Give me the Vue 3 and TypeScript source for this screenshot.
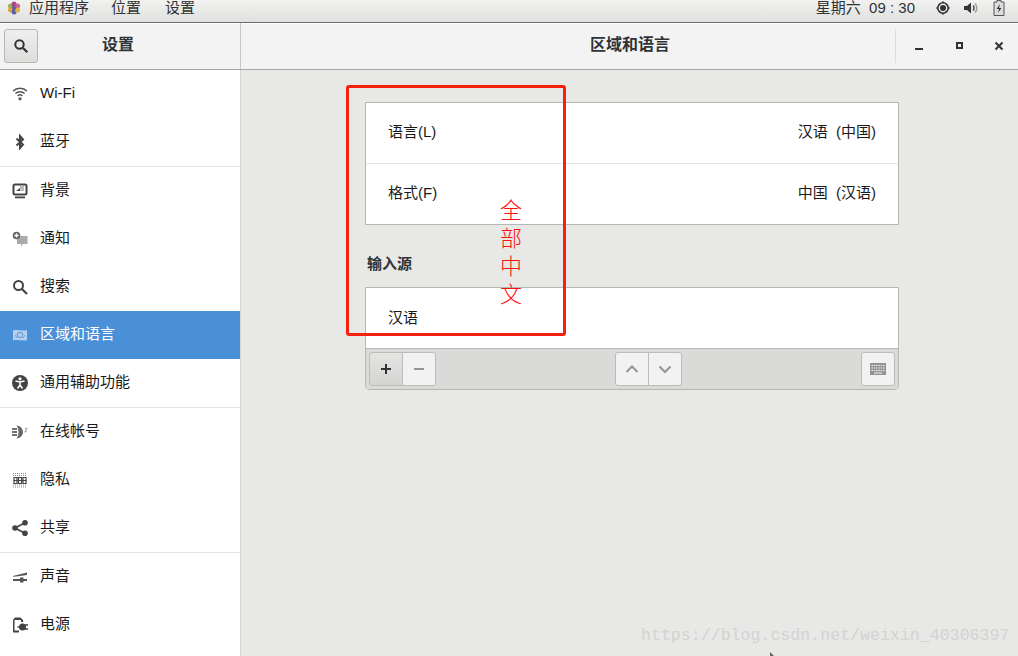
<script setup lang="ts">
interface Item { label: string; icon: string; active?: boolean; sepAfter?: boolean }
const items: Item[] = [
  { label: 'Wi-Fi', icon: 'wifi' },
  { label: '蓝牙', icon: 'bt', sepAfter: true },
  { label: '背景', icon: 'bg' },
  { label: '通知', icon: 'notify' },
  { label: '搜索', icon: 'search' },
  { label: '区域和语言', icon: 'region', active: true },
  { label: '通用辅助功能', icon: 'access', sepAfter: true },
  { label: '在线帐号', icon: 'online' },
  { label: '隐私', icon: 'privacy' },
  { label: '共享', icon: 'share', sepAfter: true },
  { label: '声音', icon: 'sound' },
  { label: '电源', icon: 'power' },
]
const redChars: string[] = ['全', '部', '中', '文']
const clock = '星期六  09 : 30'
const langValue = '汉语  (中国)'
const formatValue = '中国  (汉语)'
</script>

<template>
  <div class="root">
    <div class="topbar">
      <div class="top-left">
        <svg class="logo" width="14" height="14" viewBox="0 0 14 14">
          <circle cx="3.500" cy="5" r="2.500" fill="#9ab04a" />
          <circle cx="7" cy="3" r="2.500" fill="#a8478f" />
          <circle cx="10.500" cy="5" r="2.500" fill="#c9609a" />
          <circle cx="3.500" cy="9" r="2.500" fill="#d9a83a" />
          <circle cx="7" cy="11" r="2.500" fill="#5a62a8" />
          <circle cx="10.500" cy="9" r="2.500" fill="#e3b23c" />
          <circle cx="7" cy="7" r="2.200" fill="#6e5a9c" />
        </svg>
        <span class="menu first">应用程序</span>
        <span class="menu">位置</span>
        <span class="menu">设置</span>
      </div>
      <div class="top-right">
        <span class="clock">{{ clock }}</span>
        <svg class="tray-rec" width="14" height="14" viewBox="0 0 14 14">
          <circle cx="7" cy="7" r="5.200" fill="none" stroke="#333" stroke-width="1.600" />
          <circle cx="7" cy="7" r="3" fill="#333" />
          <path d="M7 0v2M7 12v2M0 7h2M12 7h2" stroke="#333" stroke-width="1" />
        </svg>
        <svg class="tray-vol" width="16" height="14" viewBox="0 0 16 14">
          <path d="M1 5h3l4-3.500v11L4 9H1z" fill="#333" />
          <path d="M10 4.500a3.500 3.500 0 0 1 0 5" fill="none" stroke="#444" stroke-width="1.400" />
          <path d="M12 2.500a6.500 6.500 0 0 1 0 9" fill="none" stroke="#999" stroke-width="1.400" />
        </svg>
        <svg class="tray-bat" width="12" height="16" viewBox="0 0 12 16">
          <path d="M4 .5h4v1.500h3v13.500H1V2h3z" fill="#ddd" stroke="#555" stroke-width="1" />
          <path d="M7 4 3.600 9H6l-1 4 3.400-5H6z" fill="#333" />
        </svg>
      </div>
    </div>

    <div class="headerbar">
      <div class="head-left">
        <button class="search-btn" aria-label="搜索">
          <svg width="16" height="16" viewBox="0 0 16 16">
            <circle cx="6.500" cy="6.500" r="4.200" fill="none" stroke="#2e3436" stroke-width="2" />
            <path d="M10 10l4.300 4.300" stroke="#2e3436" stroke-width="2.200" />
          </svg>
        </button>
        <span class="head-title">设置</span>
      </div>
      <div class="head-main">
        <span class="main-title">区域和语言</span>
        <div class="win-controls">
          <svg width="10" height="10" viewBox="0 0 10 10"><rect x="1" y="7" width="8" height="2" fill="#2e3436" /></svg>
          <svg width="10" height="10" viewBox="0 0 10 10"><path d="M3 2h5v5H3z" fill="none" stroke="#2e3436" stroke-width="2" /></svg>
          <svg width="10" height="10" viewBox="0 0 10 10"><path d="M1.500 1.500l7 7M8.500 1.500l-7 7" stroke="#2e3436" stroke-width="2" /></svg>
        </div>
      </div>
    </div>

    <div class="body">
      <aside class="sidebar">
        <template v-for="it in items" :key="it.label">
          <div class="row" :class="{ active: it.active }">
            <svg class="ico" width="16" height="16" viewBox="0 0 16 16">
              <g v-if="it.icon === 'wifi'" fill="none" stroke="#555" stroke-width="1.500">
                <path d="M1 5a10 10 0 0 1 14 0" />
                <path d="M3.400 7.500a6.600 6.600 0 0 1 9.200 0" />
                <path d="M5.600 10a3.400 3.400 0 0 1 4.800 0" />
                <circle cx="8" cy="12.800" r="1.600" fill="#555" stroke="none" />
              </g>
              <path v-else-if="it.icon === 'bt'" d="M4.500 4.500 11 10.500 8 14V2l3 3.500L4.500 11.500" fill="none" stroke="#444" stroke-width="2" />
              <g v-else-if="it.icon === 'bg'">
                <rect x="1.500" y="1.500" width="13" height="10" rx="1.500" fill="#fff" stroke="#444" stroke-width="2" />
                <rect x="8" y="3" width="4" height="5" fill="#bbb" />
                <path d="M4 8h4V5z" fill="#444" />
                <rect x="3" y="13.500" width="10" height="1.800" fill="#444" />
              </g>
              <g v-else-if="it.icon === 'notify'">
                <path d="M5 5h10.500v8H11l-2 2.500V13H5z" fill="#aaa" />
                <circle cx="4.500" cy="4.500" r="3.800" fill="#666" />
                <path d="M4.500 2.500v4M2.500 4.500h4" stroke="#fff" stroke-width="1.300" />
              </g>
              <g v-else-if="it.icon === 'search'" fill="none" stroke="#444" stroke-width="2">
                <circle cx="6.500" cy="6.500" r="4.500" />
                <path d="M10 10l5 5" stroke-width="2.200" />
              </g>
              <g v-else-if="it.icon === 'region'">
                <path d="M1 3.500c5-1.500 9 1 14-.5v10c-5 1.500-9-1-14 .5z" fill="#b4d0ef" />
                <circle cx="8" cy="8" r="2.600" fill="none" stroke="#6f9fd6" stroke-width="1.200" />
                <path d="M3.500 8a4.500 4.500 0 0 0 1.500 3M12.500 8a4.500 4.500 0 0 1-1.500 3" fill="none" stroke="#6f9fd6" />
              </g>
              <g v-else-if="it.icon === 'access'">
                <circle cx="8" cy="8" r="8" fill="#444" />
                <circle cx="8" cy="3.800" r="1.600" fill="#fff" />
                <path d="M3.500 6 8 7l4.500-1M8 7v3M8 10l-2.500 3.500M8 10l2.500 3.500" fill="none" stroke="#fff" stroke-width="1.500" />
              </g>
              <g v-else-if="it.icon === 'online'">
                <path d="M0 5h5M0 8h5M0 11h5" stroke="#444" stroke-width="1.600" />
                <path d="M4.500 1.500c3.500 0 6.500 3 6.500 6.500s-3 6.500-6.500 6.500c1.500-2 2-4 2-6.500s-.5-4.500-2-6.500z" fill="#666" />
                <path d="M15.500 4.500c-1.500-.8-2.500.3-1.700 1.300s.8 2.400-1.300 2" fill="none" stroke="#777" />
              </g>
              <g v-else-if="it.icon === 'privacy'">
                <path d="M1 1.500h14M1 3.500h14M1 13h14M1 15h14" stroke="#888" stroke-width="1.200" stroke-dasharray="1 1" />
                <path d="M2 5.500h3v6H2zM6.500 5.500h3v6h-3zM11 5.500h3v6h-3z" fill="none" stroke="#444" stroke-width="1.200" />
                <path d="M1.500 8.500h13" stroke="#444" />
              </g>
              <g v-else-if="it.icon === 'share'" fill="#444">
                <circle cx="3" cy="8" r="2.800" />
                <circle cx="13" cy="2.800" r="2.800" />
                <circle cx="13" cy="13.200" r="2.800" />
                <path d="M3 8l10-5.200M3 8l10 5.200" stroke="#444" stroke-width="1.600" />
              </g>
              <g v-else-if="it.icon === 'sound'" fill="#555">
                <path d="M1 7 15 3.500V6L6 7.300 1 7.800z" />
                <rect x="1" y="10" width="14" height="2" />
                <rect x="8" y="8.500" width="3.500" height="5" />
              </g>
              <g v-else-if="it.icon === 'power'">
                <path d="M3 .5h5.500L11 3v2H9V3H2.500v10.500H7V15.500H1V3z" fill="#444" />
                <circle cx="10.500" cy="10" r="3.500" fill="#444" />
                <path d="M5.500 10h3M13 8h3M13 12h3" stroke="#444" stroke-width="1.600" />
              </g>
            </svg>
            <span class="row-text">{{ it.label }}</span>
          </div>
          <div v-if="it.sepAfter" class="sep"></div>
        </template>
      </aside>

      <main class="content">
        <div class="column">
          <div class="listbox">
            <div class="lrow">
              <span class="ltext">语言(L)</span><span class="ltext">{{ langValue }}</span>
            </div>
            <div class="lrow divided">
              <span class="ltext">格式(F)</span><span class="ltext">{{ formatValue }}</span>
            </div>
          </div>
          <h3 class="section">输入源</h3>
          <div class="inputs">
            <div class="lrow single"><span class="ltext">汉语</span></div>
            <div class="toolbar">
              <div class="group">
                <button class="tbtn pressed" aria-label="添加">
                  <svg width="12" height="12" viewBox="0 0 12 12"><path d="M6 1v10M1 6h10" stroke="#2e3436" stroke-width="2" /></svg>
                </button>
                <button class="tbtn" aria-label="移除">
                  <svg width="12" height="12" viewBox="0 0 12 12"><path d="M1 6h10" stroke="#929595" stroke-width="2" /></svg>
                </button>
              </div>
              <div class="group">
                <button class="tbtn" aria-label="上移">
                  <svg width="14" height="14" viewBox="0 0 14 14"><path d="M1.500 10 7 4.500 12.500 10" fill="none" stroke="#929595" stroke-width="2" /></svg>
                </button>
                <button class="tbtn" aria-label="下移">
                  <svg width="14" height="14" viewBox="0 0 14 14"><path d="M1.500 4.500 7 10l5.500-5.500" fill="none" stroke="#929595" stroke-width="2" /></svg>
                </button>
              </div>
              <div class="group">
                <button class="tbtn" aria-label="键盘">
                  <svg width="16" height="12" viewBox="0 0 16 12">
                    <rect width="16" height="12" fill="#929595" />
                    <path d="M1.500 2.500h13M1.500 5h13M1.500 7.500h13" stroke="#f2f2f2" stroke-dasharray="1.500 .8" />
                    <path d="M4 10h8" stroke="#f2f2f2" />
                  </svg>
                </button>
              </div>
            </div>
          </div>
        </div>
      </main>
    </div>

    <div class="redbox"></div>
    <div class="redtext">
      <div v-for="c in redChars" :key="c" class="redchar">{{ c }}</div>
    </div>
    <div class="watermark">https://blog.csdn.net/weixin_40306397</div>
    <svg class="cursor" width="4" height="4" viewBox="0 0 4 4"><path d="M0 0l4 4H0z" fill="#666" /></svg>
  </div>
</template>

<style>
html, body { margin: 0; padding: 0; }
</style>

<style scoped>
.root {
  position: relative;
  width: 1018px;
  height: 656px;
  overflow: hidden;
  background: #e8e8e7;
  color: #2e3436;
  font-family: "Liberation Sans", "Noto Sans CJK SC", sans-serif;
  font-size: 15px;
}
.topbar {
  height: 23px;
  box-sizing: border-box;
  display: flex;
  justify-content: space-between;
  align-items: center;
  padding: 0 13px 7px 7px;
  background: linear-gradient(#f2f2f1, #e0e0df);
  border-bottom: 1px solid #6a6a6a;
  color: #2e3436;
}
.top-left, .top-right { display: flex; align-items: center; }
.logo { flex: none; }
.menu { margin-left: 22px; line-height: 16px; white-space: nowrap; }
.menu.first { margin-left: 8px; }
.menu:last-child { margin-left: 24px; }
.clock { margin-right: 21px; white-space: pre; line-height: 16px; }
.tray-vol { margin-left: 13px; }
.tray-bat { margin-left: 14px; }
.headerbar {
  height: 47px;
  box-sizing: border-box;
  display: flex;
  background: #f3f3f3;
  border-bottom: 1px solid #a7a7a5;
  box-shadow: inset 0 1px 0 #fff;
}
.head-left {
  width: 241px;
  box-sizing: border-box;
  display: flex;
  align-items: center;
  padding-left: 4px;
  border-right: 1px solid #c8c8c6;
}
.search-btn {
  width: 34px;
  height: 34px;
  padding: 0;
  display: flex;
  align-items: center;
  justify-content: center;
  background: linear-gradient(#efefef, #dddddc);
  border: 1px solid #b6b6b3;
  border-radius: 3px;
}
.head-title { margin-left: 64px; font-weight: 700; font-size: 16px; line-height: 20px; padding-bottom: 2px; }
.head-main {
  flex: 1;
  display: flex;
  align-items: center;
  justify-content: center;
  position: relative;
}
.main-title { font-weight: 700; font-size: 16px; line-height: 20px; padding-bottom: 2px; margin-left: 1px; }
.win-controls {
  position: absolute;
  right: 0;
  top: 6px;
  height: 34px;
  width: 123px;
  box-sizing: border-box;
  border-left: 1px solid #dcdcdb;
  display: flex;
  align-items: center;
  padding-left: 18px;
  gap: 30px;
}
.body { display: flex; height: 586px; }
.sidebar {
  width: 241px;
  box-sizing: border-box;
  background: #fff;
  border-right: 1px solid #d6d6d4;
  flex: none;
}
.row {
  height: 48px;
  display: flex;
  align-items: center;
  padding-left: 12px;
  color: #1a1a1a;
}
.row .ico { margin-right: 12px; flex: none; }
.row-text { line-height: 20px; padding-bottom: 2px; }
.row.active { background: #4a90d9; color: #fff; }
.sep { height: 1px; background: #e4e4e3; }
.content { flex: 1; display: flex; justify-content: center; }
.column { width: 534px; margin-left: 5px; padding-top: 32px; }
.listbox, .inputs {
  background: #fff;
  border: 1px solid #b6b6b3;
}
.lrow {
  height: 60px;
  box-sizing: border-box;
  display: flex;
  align-items: center;
  justify-content: space-between;
  padding: 0 22px;
  color: #1a1a1a;
}
.ltext { line-height: 20px; padding-bottom: 2px; white-space: pre; }
.lrow.divided { border-top: 1px solid #e4e4e3; height: 61px; }
.lrow.single { height: 61px; border-bottom: 1px solid #b6b6b3; }
.lrow.single .ltext { padding-bottom: 1px; }
.section {
  margin: 30px 0 14px 2px;
  font-size: 15px;
  line-height: 18px;
  font-weight: 700;
  color: #2e3436;
}
.inputs { border-radius: 0 0 4px 4px; overflow: hidden; }
.toolbar {
  height: 40px;
  box-sizing: border-box;
  background: #dadad9;
  display: flex;
  justify-content: space-between;
  align-items: flex-start;
  padding: 3px 3px 0;
}
.group { display: flex; }
.tbtn {
  width: 34px;
  height: 34px;
  padding: 0;
  display: flex;
  align-items: center;
  justify-content: center;
  background: #f2f2f2;
  border: 1px solid #bcbcba;
  margin-left: -1px;
}
.group .tbtn:first-child { border-radius: 3px 0 0 3px; margin-left: 0; }
.group .tbtn:last-child { border-radius: 0 3px 3px 0; }
.group .tbtn:only-child { border-radius: 3px; }
.tbtn.pressed { background: linear-gradient(#e4e4e3, #d4d4d3); }
.redbox {
  position: absolute;
  left: 346px;
  top: 85px;
  width: 220px;
  height: 251px;
  box-sizing: border-box;
  border: 3px solid #f5200f;
  border-radius: 3px;
}
.redtext {
  position: absolute;
  left: 499px;
  top: 194px;
  width: 24px;
}
.redchar {
  height: 28px;
  font-size: 22px;
  line-height: 28px;
  color: #ff1010;
  text-align: center;
  font-family: "Noto Sans CJK SC", sans-serif;
  font-weight: 300;
}
.watermark {
  position: absolute;
  left: 641px;
  top: 625px;
  font-family: "Liberation Mono", monospace;
  font-size: 16.600px;
  line-height: 22px;
  color: #d3d3d1;
  white-space: nowrap;
}
.cursor {
  position: absolute;
  left: 770px;
  top: 652px;
}
</style>
